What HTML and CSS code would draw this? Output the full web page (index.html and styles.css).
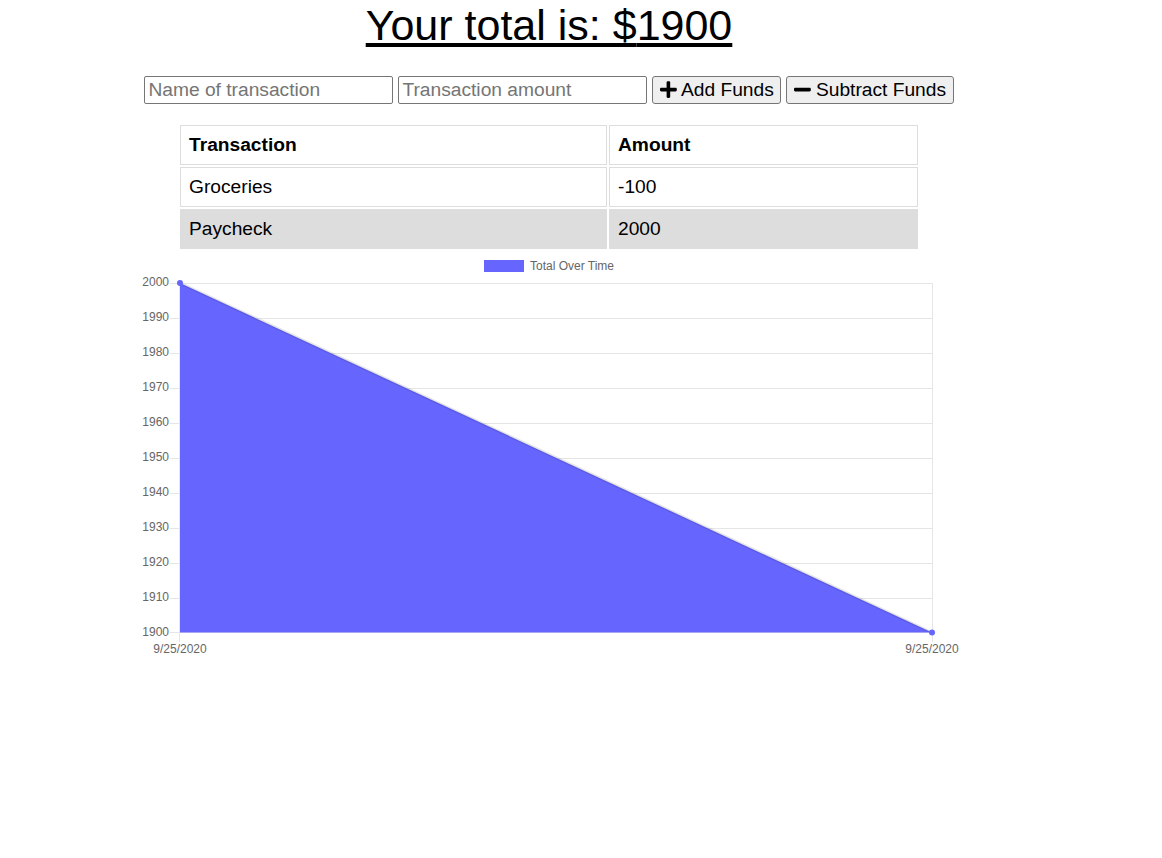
FILE: index.html
```html
<!DOCTYPE html>
<html>
<head>
<meta charset="utf-8">
<title>Budget Tracker</title>
<link rel="stylesheet" href="styles.css">
</head>
<body>
<div class="wrapper">
  <h1 class="total">Your total is: $<span class="total-amount">1900</span></h1>
  <div class="form">
    <input class="field" type="text" placeholder="Name of transaction">
    <input class="field" type="number" placeholder="Transaction amount">
    <button class="btn"><svg class="icon" viewBox="0 0 448 512"><path d="M416 208H272V64c0-17.670-14.330-32-32-32h-32c-17.670 0-32 14.330-32 32v144H32c-17.670 0-32 14.330-32 32v32c0 17.670 14.330 32 32 32h144v144c0 17.670 14.330 32 32 32h32c17.670 0 32-14.330 32-32V304h144c17.670 0 32-14.330 32-32v-32c0-17.670-14.330-32-32-32z"/></svg> Add Funds</button>
    <button class="btn"><svg class="icon" viewBox="0 0 448 512"><path d="M416 208H32c-17.670 0-32 14.330-32 32v32c0 17.670 14.330 32 32 32h384c17.670 0 32-14.330 32-32v-32c0-17.670-14.330-32-32-32z"/></svg> Subtract Funds</button>
  </div>
  <table class="tx-table">
    <thead>
      <tr><th class="col-name">Transaction</th><th class="col-amount">Amount</th></tr>
    </thead>
    <tbody>
      <tr><td>Groceries</td><td>-100</td></tr>
      <tr class="alt"><td>Paycheck</td><td>2000</td></tr>
    </tbody>
  </table>
  <div class="chart-wrap">
    <svg class="chart" width="838" height="420" viewBox="0 0 838 420">
      <g transform="translate(-130,-251)">
        <!-- legend -->
        <rect x="484.5" y="260.5" width="39" height="11" fill="#6666ff" stroke="#6666ff"/>
        <text x="530" y="270" class="lbl">Total Over Time</text>
        <!-- grid -->
        <g stroke="#e5e5e5" stroke-width="1">
          <line x1="170" y1="283.5" x2="932" y2="283.5"/>
          <line x1="170" y1="318.5" x2="932" y2="318.5"/>
          <line x1="170" y1="353.5" x2="932" y2="353.5"/>
          <line x1="170" y1="388.5" x2="932" y2="388.5"/>
          <line x1="170" y1="423.5" x2="932" y2="423.5"/>
          <line x1="170" y1="458.5" x2="932" y2="458.5"/>
          <line x1="170" y1="493.5" x2="932" y2="493.5"/>
          <line x1="170" y1="528.5" x2="932" y2="528.5"/>
          <line x1="170" y1="563.5" x2="932" y2="563.5"/>
          <line x1="170" y1="598.5" x2="932" y2="598.5"/>
          <line x1="170" y1="632.5" x2="932" y2="632.5"/>
          <line x1="179.5" y1="283" x2="179.5" y2="642"/>
          <line x1="932.5" y1="283" x2="932.5" y2="642"/>
        </g>
        <!-- y labels -->
        <g class="lbl" text-anchor="end">
          <text x="169" y="286">2000</text>
          <text x="169" y="321">1990</text>
          <text x="169" y="356">1980</text>
          <text x="169" y="391">1970</text>
          <text x="169" y="426">1960</text>
          <text x="169" y="461">1950</text>
          <text x="169" y="496">1940</text>
          <text x="169" y="531">1930</text>
          <text x="169" y="566">1920</text>
          <text x="169" y="601">1910</text>
          <text x="169" y="636">1900</text>
        </g>
        <!-- x labels -->
        <g class="lbl" text-anchor="middle">
          <text x="180" y="653">9/25/2020</text>
          <text x="932" y="653">9/25/2020</text>
        </g>
        <!-- area -->
        <polygon points="180,283 932,632.5 180,632.5" fill="#6666ff"/>
        <line x1="180" y1="283" x2="932" y2="632.5" stroke="rgba(0,0,0,0.1)" stroke-width="3"/>
        <circle cx="180" cy="283" r="3" fill="#6666ff"/>
        <circle cx="932" cy="632.5" r="3" fill="#6666ff"/>
      </g>
    </svg>
  </div>
</div>
</body>
</html>
```

FILE: styles.css
```css
html, body {
  margin: 0;
  padding: 0;
  background: #ffffff;
}

body {
  font-family: "Liberation Sans", Arial, Helvetica, sans-serif;
  color: #000;
}

.wrapper {
  width: 1098px;
  padding-top: 1px;
  display: flex;
  flex-direction: column;
  align-items: center;
}

.total {
  margin: 0;
  font-size: 43px;
  font-weight: normal;
  text-decoration: underline;
  line-height: 49px;
}

.form {
  margin-top: 26px;
  display: flex;
  gap: 5px;
  align-items: stretch;
}

.field {
  box-sizing: border-box;
  width: 249px;
  height: 28px;
  margin: 0;
  padding: 1px 3px;
  border: 1px solid #767676;
  border-radius: 2px;
  font-family: "Liberation Sans", Arial, sans-serif;
  font-size: 19.2px;
  color: #000;
  background: #fff;
}

.field::placeholder {
  color: #757575;
}

.field::-webkit-outer-spin-button,
.field::-webkit-inner-spin-button {
  -webkit-appearance: none;
  margin: 0;
}

.btn {
  box-sizing: border-box;
  height: 28px;
  margin: 0;
  padding: 0 6.5px;
  border: 1px solid #767676;
  border-radius: 3px;
  background: #efefef;
  font-family: "Liberation Sans", Arial, sans-serif;
  font-size: 19.2px;
  color: #000;
  display: flex;
  align-items: center;
  white-space: pre;
}

.icon {
  width: 16.8px;
  height: 19.2px;
  fill: #000;
}

.tx-table {
  margin-top: 19px;
  border-collapse: separate;
  border-spacing: 2px;
  font-size: 19.2px;
}

.tx-table th,
.tx-table td {
  border: 1px solid #dddddd;
  padding: 8px 8px;
  text-align: left;
  line-height: 22px;
}

.col-name {
  width: 409px;
}

.col-amount {
  width: 291px;
}

.tx-table th {
  font-weight: bold;
}

.tx-table tr.alt td {
  background: #dddddd;
}

.chart-wrap {
  display: flex;
}

.chart {
  display: block;
}

.lbl {
  font-family: "Liberation Sans", Arial, Helvetica, sans-serif;
  font-size: 12px;
  fill: #666666;
}
```
